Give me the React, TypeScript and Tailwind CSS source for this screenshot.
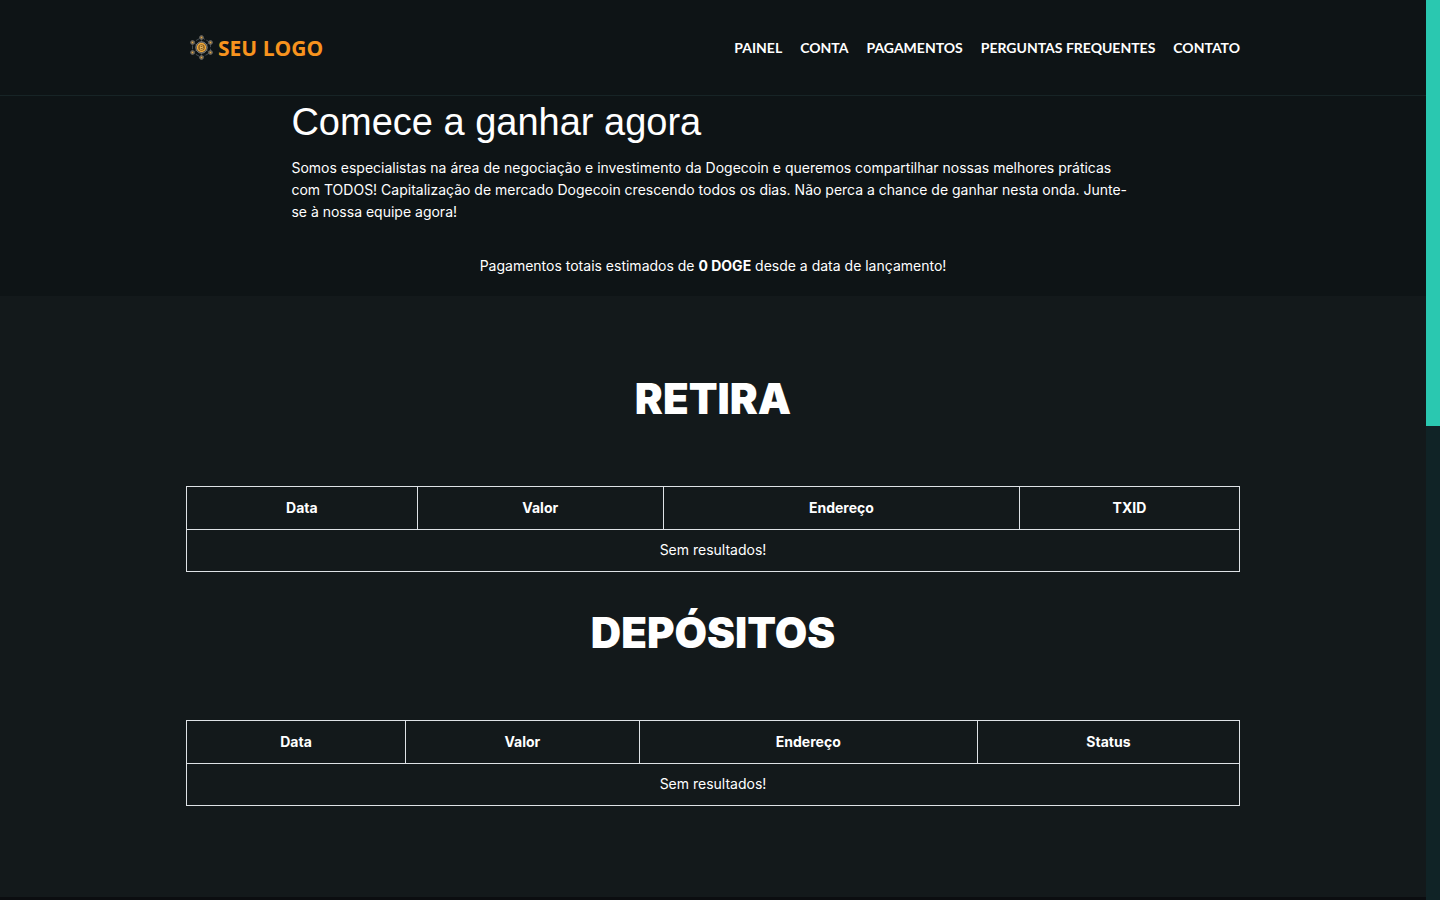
const navLinks = ['Painel', 'Conta', 'Pagamentos', 'Perguntas frequentes', 'Contato'];

interface Column {
  label: string;
  width: string;
}

interface HistoryTableProps {
  id: string;
  title: string;
  columns: Column[];
}

const withdrawColumns: Column[] = [
  { label: 'Data', width: 'w-[21.9%]' },
  { label: 'Valor', width: 'w-[23.4%]' },
  { label: 'Endereço', width: 'w-[33.8%]' },
  { label: 'TXID', width: 'w-[20.9%]' },
];

const depositColumns: Column[] = [
  { label: 'Data', width: 'w-[20.8%]' },
  { label: 'Valor', width: 'w-[22.2%]' },
  { label: 'Endereço', width: 'w-[32.1%]' },
  { label: 'Status', width: 'w-[24.9%]' },
];

// outer coins sit on a hexagon round the main one
const coins = [
  [15.5, 5.5],
  [24.5, 10.5],
  [24.5, 20.5],
  [15.5, 25.5],
  [6.5, 20.5],
  [6.5, 10.5],
];

function LogoMark() {
  return (
    <svg width="30" height="31" viewBox="0 0 30 31" fill="none" aria-hidden="true">
      <path
        d="M15.5 5.5 24.5 10.5V20.5L15.5 25.5 6.5 20.5V10.5Z"
        stroke="#4a5157"
        strokeWidth="0.9"
        strokeDasharray="4 1.5"
      />
      <path d="M15.5 5.5V25.5M6.5 10.5 24.5 20.5M24.5 10.5 6.5 20.5" stroke="#4a5157" strokeWidth="0.6" />
      {coins.map(([cx, cy]) => (
        <g key={`${cx}-${cy}`}>
          <circle cx={cx} cy={cy} r="1.9" fill="#4b4840" stroke="#85817a" strokeWidth="0.7" />
          <circle cx={cx} cy={cy} r="1" fill="#e0a548" />
        </g>
      ))}
      <circle cx="15.5" cy="15.5" r="5.6" fill="#2c2b29" stroke="#a5a6a6" strokeWidth="0.9" />
      <circle cx="15.5" cy="15.5" r="4" fill="#8a5d1d" stroke="#efa93a" strokeWidth="1.5" />
      <path
        d="M14.3 13.5h1.5a1 1 0 0 1 0 2h-1.5zm0 2h1.8a1 1 0 0 1 0 2h-1.8z"
        stroke="#f2c46c"
        strokeWidth="0.7"
      />
    </svg>
  );
}

function HistoryTable({ id, title, columns }: HistoryTableProps) {
  return (
    <section aria-labelledby={id}>
      <h2
        id={id}
        className="text-center font-['Inter',sans-serif] text-[42px] font-black leading-[50px]"
      >
        {title}
      </h2>
      <table aria-labelledby={id} className="mt-[62px] w-full table-fixed border-collapse text-center">
        <thead>
          <tr>
            {columns.map((column) => (
              <th
                key={column.label}
                scope="col"
                className={`${column.width} border border-[#dee2e6] px-3 py-2.5 font-bold`}
              >
                {column.label}
              </th>
            ))}
          </tr>
        </thead>
        <tbody>
          <tr>
            <td colSpan={columns.length} className="border border-[#dee2e6] px-3 pt-[9px] pb-2.5">
              Sem resultados!
            </td>
          </tr>
        </tbody>
      </table>
    </section>
  );
}

export default function App() {
  return (
    <div className="flex h-screen bg-[#13191b] font-['Inter',sans-serif] text-[14px] leading-[22px] text-white">
      <div className="flex min-w-0 flex-1 flex-col">
        <header className="border-b border-[#172426] bg-[#0e1416]">
          <div className="mx-auto flex h-[95px] max-w-[1054px] items-center justify-between">
            <a
              href="#"
              className="flex items-center gap-0.5 font-['Open_Sans',sans-serif] text-[21px] font-bold text-[#f7931e]"
            >
              <LogoMark />
              SEU LOGO
            </a>
            <nav className="flex gap-[18px] font-['Lato',sans-serif] text-[14px] font-bold uppercase">
              {navLinks.map((link) => (
                <a key={link} href="#" className="hover:text-[#2ac8b0]">
                  {link}
                </a>
              ))}
            </nav>
          </div>
        </header>

        <section className="bg-[#0e1416]">
          <div className="mx-auto h-[200px] max-w-[1054px]">
            <div className="mx-auto w-4/5">
              <h1 className="pt-[3px] font-['Liberation_Sans',sans-serif] text-[38px] leading-[46px]">
                Comece a ganhar agora
              </h1>
              <p className="pt-3">
                Somos especialistas na área de negociação e investimento da Dogecoin e queremos
                compartilhar nossas melhores práticas com TODOS! Capitalização de mercado Dogecoin
                crescendo todos os dias. Não perca a chance de ganhar nesta onda. Junte-se à nossa
                equipe agora!
              </p>
              <p className="pt-8 text-center">
                Pagamentos totais estimados de <b className="font-bold">0 DOGE</b> desde a data de
                lançamento!
              </p>
            </div>
          </div>
        </section>

        <main className="flex-1">
          <div className="mx-auto flex max-w-[1054px] flex-col gap-9 pt-[78px]">
            <HistoryTable id="retira" title="RETIRA" columns={withdrawColumns} />
            <HistoryTable id="depositos" title="DEPÓSITOS" columns={depositColumns} />
          </div>
        </main>

        <footer className="h-[3px] bg-[#0b0d10]" />
      </div>

      <div className="w-[14px] bg-[#102326]" aria-hidden="true">
        <div className="h-[47.3%] bg-[#2ac8b0]" />
      </div>
    </div>
  );
}
